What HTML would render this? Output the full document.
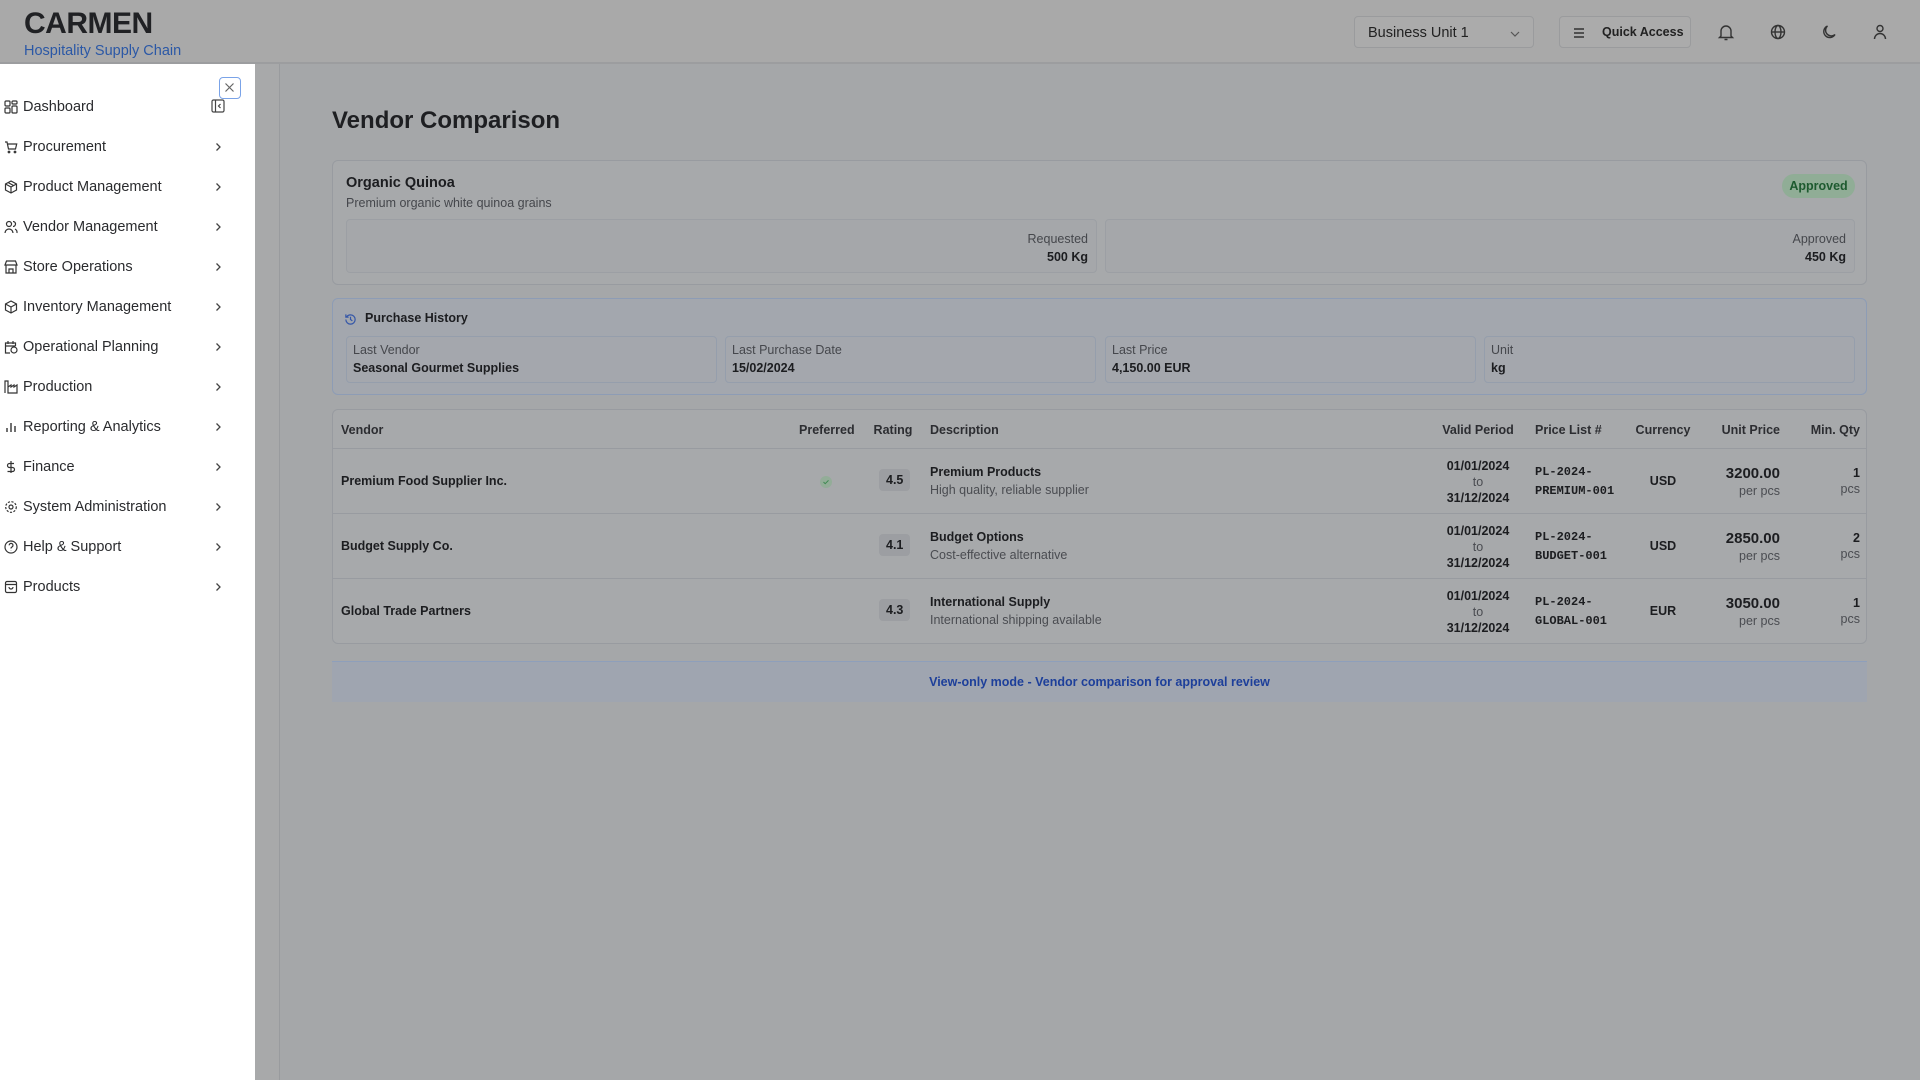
<!DOCTYPE html>
<html><head><meta charset="utf-8"><style>
*{box-sizing:border-box;margin:0;padding:0}
body{width:1920px;height:1080px;overflow:hidden;background:#a5a7a9;font-family:"Liberation Sans",sans-serif;color:#1c1d20;position:relative}
.abs{position:absolute}
#hdr{left:0;top:0;width:1920px;height:64px;background:#a9a9a9;border-bottom:2px solid #9c9d9f}
#side{left:0;top:64px;width:255px;height:1016px;background:#fff}
#strip{left:255px;top:64px;width:25px;height:1016px;background:#a8a9aa;border-right:1px solid #999b9e}
.nav{position:absolute;left:0;width:255px;height:24px;display:flex;align-items:center;font-size:14.5px;color:#2a2b2e}
.nav svg.ic{position:absolute;left:4px;width:14px;height:14px}
.nav span{position:absolute;left:23px}
.nav svg.ch{position:absolute;left:212px;width:12px;height:12px}
.card{position:absolute;background:#a7a9ab;border:1px solid #989ba0;border-radius:6px}
.box{position:absolute;border:1px solid #9c9fa4;border-radius:4px;background:#a5a7aa}
.lbl{font-size:12.5px;color:#45474c}
.val{font-size:12.5px;color:#1c1d20;font-weight:bold}
.th{position:absolute;font-size:12.5px;font-weight:bold;color:#2c2d31;top:13px}
.row{position:absolute;left:0;width:1535px;height:65px;border-top:1px solid #989ba0}
.c{position:absolute;font-size:12.5px}
.mono{font-family:"Liberation Mono",monospace;font-size:12px;line-height:19px}
.gr{color:#4a4c51}
.rb{background:#9c9ea2;border-radius:4px;padding:4px 7px;font-weight:bold;font-size:12.5px}
.ib{position:absolute;top:22px;width:20px;height:20px}
</style></head><body>
<div id="hdr" class="abs">
 <div class="abs" style="left:24px;top:7px;font-size:30px;font-weight:bold;color:#202124;letter-spacing:-0.5px">CARMEN</div>
 <div class="abs" style="left:24px;top:43px;font-size:14.5px;color:#2b58a6">Hospitality Supply Chain</div>
 <div class="abs" style="left:1354px;top:16px;width:180px;height:32px;border:1px solid #9a9b9d;border-radius:4px;background:#ababab;font-size:14.5px;padding:8px 13px;color:#222">Business Unit 1
  <svg class="abs" style="right:12px;top:12px" width="12" height="10" viewBox="0 0 12 10"><path d="M2 3l4 4 4-4" stroke="#555" fill="none" stroke-width="1.2"/></svg></div>
 <div class="abs" style="left:1559px;top:16px;width:132px;height:32px;border:1px solid #9a9b9d;border-radius:4px;background:#ababab;font-size:12.5px;font-weight:bold;padding:8px 0 0 42px;color:#222">Quick Access
  <svg class="abs" style="left:12px;top:9px" width="14" height="14" viewBox="0 0 14 14"><path d="M2 3h10M2 7h10M2 11h10" stroke="#333" stroke-width="1.4"/></svg></div>
 <svg class="ib" style="left:1716px" viewBox="0 0 20 20" fill="none" stroke="#333" stroke-width="1.4"><path d="M5 14V9a5 5 0 0110 0v5l1.5 1.5h-13L5 14zM8.5 17.5h3"/></svg>
 <svg class="ib" style="left:1768px" viewBox="0 0 20 20" fill="none" stroke="#333" stroke-width="1.4"><circle cx="10" cy="10" r="6.5"/><ellipse cx="10" cy="10" rx="3" ry="6.5"/><path d="M3.5 10h13"/></svg>
 <svg class="ib" style="left:1820px" viewBox="0 0 20 20" fill="none" stroke="#333" stroke-width="1.4"><path d="M15 12.5A6 6 0 117.5 4 5 5 0 0015 12.5z"/></svg>
 <svg class="ib" style="left:1870px" viewBox="0 0 20 20" fill="none" stroke="#333" stroke-width="1.4"><circle cx="10" cy="6.5" r="3"/><path d="M4.5 17a5.5 5.5 0 0111 0"/></svg>
</div>
<div id="side" class="abs">
 <div class="abs" style="left:219px;top:13px;width:22px;height:22px;border:1.5px solid #7aa3e8;border-radius:4px">
  <svg width="19" height="19" viewBox="0 0 19 19" style="position:absolute;left:0;top:0"><path d="M5.5 5.5l8 8M13.5 5.5l-8 8" stroke="#666" stroke-width="1.2"/></svg></div>
 <svg class="abs" style="left:211px;top:35px" width="14" height="14" viewBox="0 0 14 14" fill="none" stroke="#444" stroke-width="1.2"><rect x="1" y="1" width="12" height="12" rx="1.5"/><path d="M4.5 1v12M9.5 5l-2 2 2 2"/></svg>
</div>
<div id="strip" class="abs"></div>
<div id="navs">
<div class="nav" style="top:95px"><svg class="ic" viewBox="0 0 14 14" fill="none" stroke="#333" stroke-width="1.2"><rect x="1" y="1" width="5" height="5" rx="1"/><rect x="8" y="1" width="5" height="3" rx="1"/><rect x="1" y="8" width="5" height="5" rx="1"/><rect x="8" y="6" width="5" height="7" rx="1"/></svg><span>Dashboard</span></div>
<div class="nav" style="top:135px"><svg class="ic" viewBox="0 0 14 14" fill="none" stroke="#333" stroke-width="1.2"><path d="M1 2h2l1.5 7h7l1.2-5H4"/><circle cx="5" cy="12" r=".8"/><circle cx="11" cy="12" r=".8"/></svg><span>Procurement</span><svg class="ch" viewBox="0 0 12 12"><path d="M4.5 2.5l3.5 3.5-3.5 3.5" stroke="#444" fill="none" stroke-width="1.3"/></svg></div>
<div class="nav" style="top:175px"><svg class="ic" viewBox="0 0 14 14" fill="none" stroke="#333" stroke-width="1.2"><path d="M7 1l5.5 3v6L7 13 1.5 10V4zM1.5 4L7 7l5.5-3M7 7v6M4 2.5l5.5 3"/></svg><span>Product Management</span><svg class="ch" viewBox="0 0 12 12"><path d="M4.5 2.5l3.5 3.5-3.5 3.5" stroke="#444" fill="none" stroke-width="1.3"/></svg></div>
<div class="nav" style="top:215px"><svg class="ic" viewBox="0 0 14 14" fill="none" stroke="#333" stroke-width="1.2"><circle cx="5" cy="4" r="2.5"/><path d="M1 13a4 4 0 018 0M9 1.5a2.5 2.5 0 010 5M11 9a4 4 0 012 4"/></svg><span>Vendor Management</span><svg class="ch" viewBox="0 0 12 12"><path d="M4.5 2.5l3.5 3.5-3.5 3.5" stroke="#444" fill="none" stroke-width="1.3"/></svg></div>
<div class="nav" style="top:255px"><svg class="ic" viewBox="0 0 14 14" fill="none" stroke="#333" stroke-width="1.2"><path d="M1 5l1.5-4h9L13 5H1zM2 5v8h10V5M5 13V9h4v4"/></svg><span>Store Operations</span><svg class="ch" viewBox="0 0 12 12"><path d="M4.5 2.5l3.5 3.5-3.5 3.5" stroke="#444" fill="none" stroke-width="1.3"/></svg></div>
<div class="nav" style="top:295px"><svg class="ic" viewBox="0 0 14 14" fill="none" stroke="#333" stroke-width="1.2"><path d="M7 1l5.5 3v6L7 13 1.5 10V4zM1.5 4L7 7l5.5-3M7 7v6"/></svg><span>Inventory Management</span><svg class="ch" viewBox="0 0 12 12"><path d="M4.5 2.5l3.5 3.5-3.5 3.5" stroke="#444" fill="none" stroke-width="1.3"/></svg></div>
<div class="nav" style="top:335px"><svg class="ic" viewBox="0 0 14 14" fill="none" stroke="#333" stroke-width="1.2"><path d="M6 13H1.5V3h10v3M1.5 6h10M4 1v3M9 1v3"/><circle cx="10" cy="10" r="3"/></svg><span>Operational Planning</span><svg class="ch" viewBox="0 0 12 12"><path d="M4.5 2.5l3.5 3.5-3.5 3.5" stroke="#444" fill="none" stroke-width="1.3"/></svg></div>
<div class="nav" style="top:375px"><svg class="ic" viewBox="0 0 14 14" fill="none" stroke="#333" stroke-width="1.2"><path d="M1 13V1h3v12h9V5l-3 2V5L7 7V5L4 7"/></svg><span>Production</span><svg class="ch" viewBox="0 0 12 12"><path d="M4.5 2.5l3.5 3.5-3.5 3.5" stroke="#444" fill="none" stroke-width="1.3"/></svg></div>
<div class="nav" style="top:415px"><svg class="ic" viewBox="0 0 14 14" fill="none" stroke="#333" stroke-width="1.4"><path d="M3 12V8M7 12V3M11 12V6"/></svg><span>Reporting &amp; Analytics</span><svg class="ch" viewBox="0 0 12 12"><path d="M4.5 2.5l3.5 3.5-3.5 3.5" stroke="#444" fill="none" stroke-width="1.3"/></svg></div>
<div class="nav" style="top:455px"><svg class="ic" viewBox="0 0 14 14" fill="none" stroke="#333" stroke-width="1.2"><path d="M7 1v12M10 3.5H5.5a2 2 0 000 4h3a2 2 0 010 4H3.5"/></svg><span>Finance</span><svg class="ch" viewBox="0 0 12 12"><path d="M4.5 2.5l3.5 3.5-3.5 3.5" stroke="#444" fill="none" stroke-width="1.3"/></svg></div>
<div class="nav" style="top:495px"><svg class="ic" viewBox="0 0 14 14" fill="none" stroke="#333" stroke-width="1.2"><circle cx="7" cy="7" r="2"/><circle cx="7" cy="7" r="5.3" stroke-dasharray="2.2 1.4"/></svg><span>System Administration</span><svg class="ch" viewBox="0 0 12 12"><path d="M4.5 2.5l3.5 3.5-3.5 3.5" stroke="#444" fill="none" stroke-width="1.3"/></svg></div>
<div class="nav" style="top:535px"><svg class="ic" viewBox="0 0 14 14" fill="none" stroke="#333" stroke-width="1.2"><circle cx="7" cy="7" r="6"/><path d="M5.2 5.3a1.9 1.9 0 113 1.5c-.8.5-1.2.8-1.2 1.7M7 10.3v.2"/></svg><span>Help &amp; Support</span><svg class="ch" viewBox="0 0 12 12"><path d="M4.5 2.5l3.5 3.5-3.5 3.5" stroke="#444" fill="none" stroke-width="1.3"/></svg></div>
<div class="nav" style="top:575px"><svg class="ic" viewBox="0 0 14 14" fill="none" stroke="#333" stroke-width="1.2"><rect x="1.5" y="1.5" width="11" height="11" rx="1.5"/><path d="M1.5 4.5h11M5 7a2 2 0 004 0"/></svg><span>Products</span><svg class="ch" viewBox="0 0 12 12"><path d="M4.5 2.5l3.5 3.5-3.5 3.5" stroke="#444" fill="none" stroke-width="1.3"/></svg></div>
</div>

<div class="abs" style="left:332px;top:107px;font-size:24px;font-weight:bold;color:#1e1f22">Vendor Comparison</div>

<div class="card" style="left:332px;top:160px;width:1535px;height:125px">
 <div class="abs" style="left:13px;top:14px;font-size:14.5px;font-weight:bold">Organic Quinoa</div>
 <div class="abs" style="left:13px;top:35px;font-size:12.5px;color:#45474c">Premium organic white quinoa grains</div>
 <div class="abs" style="left:1449px;top:13px;width:73px;height:24px;border-radius:12px;background:#90ad96;color:#1d5a2f;font-size:12.5px;font-weight:bold;text-align:center;line-height:24px">Approved</div>
 <div class="box" style="left:13px;top:58px;width:751px;height:54px;text-align:right;padding:12px 8px 0 0"><div class="lbl">Requested</div><div class="val" style="margin-top:4px">500 Kg</div></div>
 <div class="box" style="left:772px;top:58px;width:750px;height:54px;text-align:right;padding:12px 8px 0 0"><div class="lbl">Approved</div><div class="val" style="margin-top:4px">450 Kg</div></div>
</div>

<div class="card" style="left:332px;top:298px;width:1535px;height:97px;background:#a3a7ae;border-color:#8d9cb5">
 <svg class="abs" style="left:11px;top:14px" width="13" height="13" viewBox="0 0 14 14" fill="none" stroke="#3456a8" stroke-width="1.3"><path d="M2 7a5 5 0 105-5 5 5 0 00-4 2M2 1.5V4.5h3M7 4v3l2 1.5"/></svg>
 <div class="abs" style="left:32px;top:12px;font-size:12.5px;font-weight:bold">Purchase History</div>
 <div class="box" style="left:13px;top:37px;width:371px;height:47px;padding:6px 6px;background:#a4a7ad;border-color:#959eac"><div class="lbl">Last Vendor</div><div class="val" style="margin-top:4px">Seasonal Gourmet Supplies</div></div>
 <div class="box" style="left:392px;top:37px;width:371px;height:47px;padding:6px 6px;background:#a4a7ad;border-color:#959eac"><div class="lbl">Last Purchase Date</div><div class="val" style="margin-top:4px">15/02/2024</div></div>
 <div class="box" style="left:772px;top:37px;width:371px;height:47px;padding:6px 6px;background:#a4a7ad;border-color:#959eac"><div class="lbl">Last Price</div><div class="val" style="margin-top:4px">4,150.00 EUR</div></div>
 <div class="box" style="left:1151px;top:37px;width:371px;height:47px;padding:6px 6px;background:#a4a7ad;border-color:#959eac"><div class="lbl">Unit</div><div class="val" style="margin-top:4px">kg</div></div>
</div>

<div class="card" style="left:332px;top:409px;width:1535px;height:235px;overflow:hidden">
 <div class="th" style="left:8px">Vendor</div>
 <div class="th" style="left:466px;width:54px;text-align:center">Preferred</div>
 <div class="th" style="left:536px;width:48px;text-align:center">Rating</div>
 <div class="th" style="left:597px">Description</div>
 <div class="th" style="left:1100px;width:90px;text-align:center">Valid Period</div>
 <div class="th" style="left:1202px">Price List #</div>
 <div class="th" style="left:1290px;width:80px;text-align:center">Currency</div>
 <div class="th" style="left:1347px;width:100px;text-align:right">Unit Price</div>
 <div class="th" style="left:1427px;width:100px;text-align:right">Min. Qty</div>

 <div class="row" style="top:38px">
  <div class="c" style="left:8px;top:25px;font-weight:bold">Premium Food Supplier Inc.</div>
  <div class="abs" style="left:487px;top:27px;width:12px;height:12px;border-radius:50%;background:#93ad98"><svg width="12" height="12" viewBox="0 0 12 12" style="position:absolute"><path d="M3.5 6l1.7 1.7 3.3-3.3" stroke="#3f8a52" fill="none" stroke-width="1"/></svg></div>
  <div class="c" style="left:546px;top:24px"><span class="rb">4.5</span></div>
  <div class="c" style="left:597px;top:16px;font-weight:bold">Premium Products</div>
  <div class="c gr" style="left:597px;top:34px">High quality, reliable supplier</div>
  <div class="c" style="left:1100px;top:9px;width:90px;text-align:center;line-height:16px;font-weight:bold">01/01/2024<br><span class="gr" style="font-weight:normal">to</span><br>31/12/2024</div>
  <div class="c mono" style="left:1202px;top:14px;font-weight:bold">PL-2024-<br>PREMIUM-001</div>
  <div class="c" style="left:1290px;top:25px;width:80px;text-align:center;font-weight:bold">USD</div>
  <div class="c" style="left:1347px;top:16px;width:100px;text-align:right;font-weight:bold;font-size:15px">3200.00</div>
  <div class="c gr" style="left:1347px;top:35px;width:100px;text-align:right">per pcs</div>
  <div class="c" style="left:1427px;top:17px;width:100px;text-align:right;font-weight:bold">1</div>
  <div class="c gr" style="left:1427px;top:33px;width:100px;text-align:right">pcs</div>
 </div>
 <div class="row" style="top:103px">
  <div class="c" style="left:8px;top:25px;font-weight:bold">Budget Supply Co.</div>
  <div class="c" style="left:546px;top:24px"><span class="rb">4.1</span></div>
  <div class="c" style="left:597px;top:16px;font-weight:bold">Budget Options</div>
  <div class="c gr" style="left:597px;top:34px">Cost-effective alternative</div>
  <div class="c" style="left:1100px;top:9px;width:90px;text-align:center;line-height:16px;font-weight:bold">01/01/2024<br><span class="gr" style="font-weight:normal">to</span><br>31/12/2024</div>
  <div class="c mono" style="left:1202px;top:14px;font-weight:bold">PL-2024-<br>BUDGET-001</div>
  <div class="c" style="left:1290px;top:25px;width:80px;text-align:center;font-weight:bold">USD</div>
  <div class="c" style="left:1347px;top:16px;width:100px;text-align:right;font-weight:bold;font-size:15px">2850.00</div>
  <div class="c gr" style="left:1347px;top:35px;width:100px;text-align:right">per pcs</div>
  <div class="c" style="left:1427px;top:17px;width:100px;text-align:right;font-weight:bold">2</div>
  <div class="c gr" style="left:1427px;top:33px;width:100px;text-align:right">pcs</div>
 </div>
 <div class="row" style="top:168px">
  <div class="c" style="left:8px;top:25px;font-weight:bold">Global Trade Partners</div>
  <div class="c" style="left:546px;top:24px"><span class="rb">4.3</span></div>
  <div class="c" style="left:597px;top:16px;font-weight:bold">International Supply</div>
  <div class="c gr" style="left:597px;top:34px">International shipping available</div>
  <div class="c" style="left:1100px;top:9px;width:90px;text-align:center;line-height:16px;font-weight:bold">01/01/2024<br><span class="gr" style="font-weight:normal">to</span><br>31/12/2024</div>
  <div class="c mono" style="left:1202px;top:14px;font-weight:bold">PL-2024-<br>GLOBAL-001</div>
  <div class="c" style="left:1290px;top:25px;width:80px;text-align:center;font-weight:bold">EUR</div>
  <div class="c" style="left:1347px;top:16px;width:100px;text-align:right;font-weight:bold;font-size:15px">3050.00</div>
  <div class="c gr" style="left:1347px;top:35px;width:100px;text-align:right">per pcs</div>
  <div class="c" style="left:1427px;top:17px;width:100px;text-align:right;font-weight:bold">1</div>
  <div class="c gr" style="left:1427px;top:33px;width:100px;text-align:right">pcs</div>
 </div>
</div>

<div class="abs" style="left:332px;top:661px;width:1535px;height:41px;background:#9fa5b0;border-top:1px solid #8e9fbb;text-align:center;line-height:40px;font-size:12.5px;font-weight:bold;color:#1d3f9a">View-only mode - Vendor comparison for approval review</div>
</body></html>
